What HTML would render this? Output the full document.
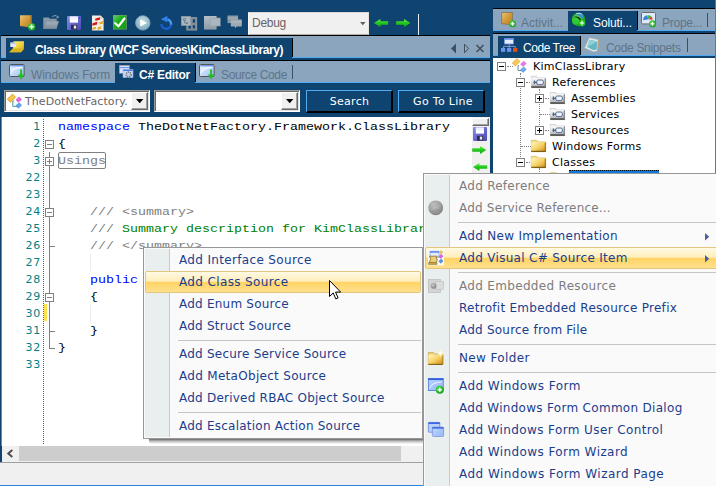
<!DOCTYPE html>
<html lang="en">
<head>
<meta charset="utf-8">
<title>Class Library - C# Editor</title>
<style>
*{box-sizing:border-box;margin:0;padding:0}
html,body{width:716px;height:486px;overflow:hidden}
body{position:relative;background:#0f4370;font-family:"Liberation Sans",sans-serif;font-size:13px;color:#000}
.a{position:absolute}
.t{position:absolute;white-space:nowrap;line-height:1}
svg{position:absolute;overflow:visible}
.strip{position:absolute;background:#8aa5bd}
.dk{position:absolute;background:#0f4370}
.bk{position:absolute;background:#000}
.bl{position:absolute;background:#52aaf0}
.tab{position:absolute;white-space:nowrap;font-size:12px;line-height:16px;color:#5f748a}
.tab.sel{color:#fff;font-weight:bold}
.code{position:absolute;white-space:pre;font-family:"Liberation Mono",monospace;font-size:13.33px;line-height:17px;height:17px;color:#000;transform:scaleY(.86);transform-origin:0 12px}
.kw{color:#0000ff}.cm{color:#008000}.gr{color:#808080}
.ln{position:absolute;left:0;width:41.100px;text-align:right;font-family:"DejaVu Sans","Liberation Sans",sans-serif;font-size:11px;line-height:17px;height:17px;color:#008284;letter-spacing:.85px;white-space:nowrap}
.tr{position:absolute;white-space:nowrap;font-family:"DejaVu Sans","Liberation Sans",sans-serif;font-size:11px;line-height:16px;height:16px;color:#000;letter-spacing:.27px}
.menu{position:absolute;background:#fafafa;border:1px solid #979797}
.gut{position:absolute;left:1px;top:1px;bottom:1px;width:25px;background:#e9eeee;border-right:1px solid #c8cbcb}
.mi{position:absolute;white-space:nowrap;font-family:"DejaVu Sans","Liberation Sans",sans-serif;font-size:12px;line-height:22px;height:22px;color:#1a3d8c;letter-spacing:.27px}
.mi.dis{color:#7d7d7d}
.sep{position:absolute;height:1px;background:#c5c5c5}
.hl{position:absolute;border:1px solid #e2c67e;border-radius:2px;background:linear-gradient(#fffae4 0%,#ffeebc 46%,#ffd464 52%,#ffe08e 100%)}
.combo{position:absolute;background:#fff;border:1px solid;border-color:#9a9a9a #fff #fff #9a9a9a;box-shadow:inset 1px 1px 0 #6a6a6a,inset -1px -1px 0 #e3e3e3}
.cbtn{position:absolute;background:#f0f0f0;border:1px solid;border-color:#fff #696969 #696969 #fff;box-shadow:inset -1px -1px 0 #a0a0a0}
.btn{position:absolute;background:#0f4370;border:1px solid #52aaf0;border-right:2px solid #000;border-bottom:2px solid #000;color:#fff;text-align:center;font-family:"DejaVu Sans","Liberation Sans",sans-serif;font-size:11px;letter-spacing:.3px;line-height:22px;white-space:nowrap;padding-left:4px}
.fold{position:absolute;width:9px;height:9px;border:1px solid #808080;background:#fff}
.fold i{position:absolute;left:1px;top:3px;width:5px;height:1px;background:#808080}
.fold b{position:absolute;left:3px;top:1px;width:1px;height:5px;background:#808080}
.tx{position:absolute;width:9px;height:9px;border:1px solid #808080;background:#fff}
.tx i{position:absolute;left:1px;top:3px;width:5px;height:1px;background:#000}
.tx b{position:absolute;left:3px;top:1px;width:1px;height:5px;background:#000}
.dv{position:absolute;width:0;border-left:1px dotted #808080}
.dh{position:absolute;height:0;border-top:1px dotted #808080}
</style>
</head>
<body>
<!-- ===== top toolbar ===== -->
<div class="a" id="toolbar" style="left:0;top:0;width:493px;height:35px">
  <div class="a" style="left:248px;top:12px;width:121px;height:23px;background:#f0f0f0;border:1px solid #f8f8f8;border-top-color:#d8d8d8;border-right-color:#e6e2de;border-bottom-color:#b4aca6"></div>
  <div class="tab" style="left:252px;top:15px;letter-spacing:-.28px;color:#6b6464">Debug</div>
  <svg style="left:360px;top:22px" width="6" height="4" viewBox="0 0 6 4"><path d="M0 0h5.600L2.800 3.200z" fill="#606060"/></svg>
  <div class="a" style="left:418px;top:14px;width:1px;height:21px;background:#e8eef4"></div>
</div>

<!-- ===== document title strip ===== -->
<div class="bk" style="left:1px;top:35px;width:489px;height:1px"></div>
<div class="strip" style="left:1px;top:36px;width:489px;height:21px"></div>
<div class="bl" style="left:1px;top:57px;width:489px;height:1px"></div>
<div class="dk" style="left:6px;top:38px;width:286px;height:20px"></div>
<div class="bk" style="left:292px;top:38px;width:1px;height:19px"></div>
<div class="tab sel" style="left:35px;top:42px;letter-spacing:-.41px">Class Library (WCF Services\KimClassLibrary)</div>
<svg style="left:450px;top:43px" width="36" height="11" viewBox="0 0 36 11">
  <path d="M6 0.500v10L1 5.500z" fill="#3f4f5f"/>
  <path d="M14.500 1.200v8.600L18.600 5.500z" fill="none" stroke="#3f4f5f" stroke-width="1"/>
  <path d="M26.500 2l7 7M33.500 2l-7 7" stroke="#3f4f5f" stroke-width="1.500" fill="none"/>
</svg>
<div class="bk" style="left:1px;top:60px;width:489px;height:1px"></div>

<!-- ===== editor sub tabs ===== -->
<div class="strip" style="left:1px;top:61px;width:489px;height:21px"></div>
<div class="bl" style="left:1px;top:82px;width:489px;height:1px"></div>
<div class="dk" style="left:115px;top:63px;width:80px;height:20px"></div>
<div class="bk" style="left:195px;top:63px;width:1px;height:19px"></div>
<div class="tab" style="left:31px;top:67px;letter-spacing:-.08px">Windows Form</div>
<div class="tab sel" style="left:139px;top:67px;letter-spacing:-.26px">C# Editor</div>
<div class="tab" style="left:221px;top:67px;letter-spacing:-.37px">Source Code</div>
<div class="a" style="left:292px;top:65px;width:1px;height:14px;background:#3f4f5f"></div>

<!-- ===== combo / button row ===== -->
<div class="combo" style="left:4px;top:90px;width:146px;height:22px"></div>
<div class="t" style="left:25px;top:96px;font-family:'DejaVu Sans','Liberation Sans',sans-serif;font-size:11px;color:#6b6464;letter-spacing:.09px">TheDotNetFactory.</div>
<div class="cbtn" style="left:131px;top:92px;width:17px;height:18px"></div>
<svg style="left:136px;top:99px" width="8" height="5" viewBox="0 0 8 5"><path d="M0 0h7.400L3.700 4.300z" fill="#000"/></svg>
<div class="combo" style="left:154px;top:90px;width:146px;height:22px"></div>
<div class="cbtn" style="left:281px;top:92px;width:17px;height:18px"></div>
<svg style="left:286px;top:99px" width="8" height="5" viewBox="0 0 8 5"><path d="M0 0h7.400L3.700 4.300z" fill="#000"/></svg>
<div class="btn" style="left:306px;top:90px;width:87px;height:23px;padding-left:1px">Search</div>
<div class="btn" style="left:398px;top:90px;width:87px;height:23px">Go To Line</div>

<!-- ===== right panel tabs ===== -->
<div class="bk" style="left:493px;top:8px;width:222px;height:1px"></div>
<div class="strip" style="left:493px;top:9px;width:223px;height:21px"></div>
<div class="bl" style="left:493px;top:30px;width:223px;height:1px"></div>
<div class="dk" style="left:568px;top:11px;width:69px;height:20px"></div>
<div class="bk" style="left:637px;top:11px;width:1px;height:19px"></div>
<div class="tab" style="left:521px;top:15px">Activit...</div>
<div class="tab sel" style="left:593px;top:15px;font-weight:normal;letter-spacing:-.11px">Soluti...</div>
<div class="tab" style="left:662px;top:15px;letter-spacing:-.25px">Prope...</div>
<div class="a" style="left:707px;top:13px;width:1px;height:14px;background:#3f4f5f"></div>
<div class="bk" style="left:493px;top:33px;width:222px;height:1px"></div>
<div class="strip" style="left:493px;top:34px;width:223px;height:21px"></div>
<div class="bl" style="left:493px;top:55px;width:223px;height:1px"></div>
<div class="dk" style="left:498px;top:36px;width:82px;height:20px"></div>
<div class="bk" style="left:580px;top:36px;width:1px;height:19px"></div>
<div class="tab sel" style="left:523px;top:40px;font-weight:normal;letter-spacing:-.45px">Code Tree</div>
<div class="tab" style="left:606px;top:40px;letter-spacing:-.32px">Code Snippets</div>
<div class="a" style="left:687px;top:38px;width:1px;height:14px;background:#3f4f5f"></div>
<div class="a" style="left:715px;top:0;width:1px;height:486px;background:#2a86dc"></div>
<!-- ===== shared gradients ===== -->
<svg width="0" height="0" style="left:0;top:0">
  <defs>
    <linearGradient id="gGold" x1="0" y1="0" x2="1" y2="1"><stop offset="0" stop-color="#e9c47a"/><stop offset=".5" stop-color="#d39a3a"/><stop offset="1" stop-color="#b57a1c"/></linearGradient>
    <radialGradient id="gPlus" cx=".4" cy=".35" r=".7"><stop offset="0" stop-color="#5fe05f"/><stop offset="1" stop-color="#0f9a1a"/></radialGradient>
    <linearGradient id="gFolderG" x1="0" y1="0" x2="0" y2="1"><stop offset="0" stop-color="#a3b1bb"/><stop offset="1" stop-color="#7c8d99"/></linearGradient>
    <linearGradient id="gFloppy" x1="0" y1="0" x2="1" y2="1"><stop offset="0" stop-color="#8a8ae6"/><stop offset="1" stop-color="#4a49b4"/></linearGradient>
    <linearGradient id="gCheck" x1="0" y1="0" x2="1" y2="1"><stop offset="0" stop-color="#6fd06f"/><stop offset=".4" stop-color="#1fb01f"/><stop offset="1" stop-color="#0f9a10"/></linearGradient>
    <radialGradient id="gPlay" cx=".5" cy=".35" r=".75"><stop offset="0" stop-color="#c4dde6"/><stop offset="1" stop-color="#6fa3b8"/></radialGradient>
    <linearGradient id="gWin" x1="0" y1="0" x2="1" y2="1"><stop offset="0" stop-color="#f4f8ff"/><stop offset=".5" stop-color="#c3d9fb"/><stop offset="1" stop-color="#9fc2f6"/></linearGradient>
    <linearGradient id="gGrn" x1="0" y1="0" x2="0" y2="1"><stop offset="0" stop-color="#6cf04c"/><stop offset=".5" stop-color="#22c81e"/><stop offset="1" stop-color="#17a514"/></linearGradient>
    <linearGradient id="gGray" x1="0" y1="0" x2="0" y2="1"><stop offset="0" stop-color="#b4c0c8"/><stop offset="1" stop-color="#8d9ba5"/></linearGradient>
    <linearGradient id="gYel" x1="0" y1="0" x2="1" y2="1"><stop offset="0" stop-color="#fff3a6"/><stop offset=".5" stop-color="#f2d63c"/><stop offset="1" stop-color="#c9a516"/></linearGradient>
    <linearGradient id="gFold" x1="0" y1="0" x2="1" y2="1"><stop offset="0" stop-color="#fff6c4"/><stop offset=".5" stop-color="#f6d264"/><stop offset="1" stop-color="#c98a12"/></linearGradient>
    <linearGradient id="gRef" x1="0" y1="0" x2="0" y2="1"><stop offset="0" stop-color="#fbfbfb"/><stop offset=".55" stop-color="#d8d8d8"/><stop offset="1" stop-color="#9a9a9a"/></linearGradient>
    <radialGradient id="gBall" cx=".4" cy=".35" r=".7"><stop offset="0" stop-color="#c9c9c9"/><stop offset="1" stop-color="#7e7e7e"/></radialGradient>
    <radialGradient id="gGlobe" cx=".4" cy=".4" r=".7"><stop offset="0" stop-color="#58e058"/><stop offset="1" stop-color="#0c8c14"/></radialGradient>
  </defs>
</svg>

<!-- ===== toolbar icons ===== -->
<!-- new item -->
<svg style="left:19px;top:14px" width="18" height="18" viewBox="0 0 18 18">
  <path d="M1 1.200h11.600v12.600l-5-.9L1 12z" fill="url(#gGold)"/>
  <path d="M11.400 1.200h1.200v12.600l-1.200-.3z" fill="#a8701a"/>
  <circle cx="12.700" cy="12.900" r="3.700" fill="url(#gPlus)"/>
  <path d="M10.400 12.900h4.600M12.700 10.600v4.600" stroke="#fff" stroke-width="1.200"/>
</svg>
<!-- open folder (grey) -->
<svg style="left:43px;top:14px" width="17" height="16" viewBox="0 0 17 16">
  <path d="M0.300 3.500h5.400l1.200 1.300h6.800v9.900H0.300z" fill="#8a9aa6"/>
  <path d="M3.300 7.200h12.500L13.400 14.700H0.300z" fill="url(#gFolderG)" stroke="#74858f" stroke-width=".5"/>
  <path d="M9.200 3.200c1.200-2 3.800-2.200 5.200-.4" fill="none" stroke="#95a5b0" stroke-width="1"/>
  <path d="M13.200 4.200l2.600-.2-.6-2.500z" fill="#95a5b0"/>
</svg>
<!-- save -->
<svg style="left:67px;top:16px" width="14" height="14" viewBox="0 0 14 14">
  <rect x="0" y="0" width="14" height="14" rx="1" fill="url(#gFloppy)"/>
  <rect x="2.800" y="0.600" width="8.200" height="6" fill="#fff"/>
  <rect x="2.800" y="0.600" width="8.200" height="3" fill="#eef0fb"/>
  <rect x="4" y="8.800" width="6.200" height="4.800" fill="#2b2b50"/>
  <rect x="6.800" y="9.600" width="2.400" height="3" fill="#e8e8f4"/>
  <rect x="12" y="1.200" width="1" height="1.200" fill="#35358f"/>
</svg>
<!-- script page -->
<svg style="left:92px;top:15px" width="13" height="16" viewBox="0 0 13 16">
  <path d="M0 0.500h8.600l3 3V15.500H0z" fill="#f4efe6"/>
  <path d="M8.600 0.500v3h3z" fill="#c9c1b2"/>
  <path d="M3.300 3.600l4.700-1.400v2.500L3.300 5.800z" fill="#d81a1a"/>
  <path d="M0.400 8.200l4.800-1.500v2.700L0.400 10.700z" fill="#d81a1a"/>
  <path d="M7.200 7.400l4.200-1.600-.8 1.800 1.900.4-4.600 1.600z" fill="#e7a81a"/>
  <path d="M0.400 12.800l3.600-1v2l-3.600 1z" fill="#e7a81a"/>
  <path d="M5.600 12.600l4-1.600-1 1.900 1.500.4-4.200 1.800z" fill="#e7a81a"/>
</svg>
<!-- check -->
<svg style="left:113px;top:15px" width="14" height="15" viewBox="0 0 14 15">
  <rect x="0" y="0" width="13.600" height="14.400" fill="url(#gCheck)"/>
  <rect x="0.300" y="0.300" width="13" height="13.800" fill="none" stroke="#7a9a7c" stroke-width=".6"/>
  <path d="M2.200 8.200l3.200 3.100 6-7.800" fill="none" stroke="#fff" stroke-width="2.200" stroke-linecap="round" stroke-linejoin="round"/>
</svg>
<!-- play -->
<svg style="left:135px;top:15px" width="16" height="16" viewBox="0 0 16 16">
  <circle cx="7.800" cy="7.900" r="7.200" fill="url(#gPlay)" stroke="#8fa9b6" stroke-width=".8"/>
  <path d="M5.200 4.200v7.400L12 7.900z" fill="#fff"/>
</svg>
<!-- refresh -->
<svg style="left:159px;top:15px" width="15" height="16" viewBox="0 0 15 16">
  <path d="M8.400 4.300A4.800 4.800 0 1 1 2.400 9" fill="none" stroke="#1a5fd0" stroke-width="2.400"/>
  <path d="M8.400 4.300A4.800 4.800 0 0 1 12 9.600" fill="none" stroke="#4a98f6" stroke-width="2.400"/>
  <path d="M1.800 4.200L8.400 0.800v6.400z" fill="#2f80ee"/>
</svg>
<!-- designer (grey) -->
<svg style="left:181px;top:16px" width="17" height="15" viewBox="0 0 17 15">
  <rect x="5.200" y="1" width="11" height="13.600" fill="#7f8e99"/>
  <rect x="11.800" y="3.400" width="2.200" height="3.200" fill="#0f4370"/>
  <rect x="11.800" y="9.200" width="2.200" height="3.200" fill="#0f4370"/>
  <rect x="7.600" y="9.600" width="2.200" height="3" fill="#0f4370"/>
  <rect x="0.300" y="0.300" width="9.400" height="9.200" fill="#aab6bf" stroke="#8b99a3" stroke-width=".6"/>
  <path d="M2.500 2.500h2v2h-2zM3.500 4.500v2.500h2.500M6 6l1 1-1 1-1-1z" fill="none" stroke="#6c7b86" stroke-width=".8"/>
</svg>
<!-- windows (grey) -->
<svg style="left:204px;top:16px" width="17" height="14" viewBox="0 0 17 14">
  <rect x="0" y="0" width="12.600" height="13.600" fill="url(#gGray)"/>
  <rect x="6.200" y="2" width="10" height="8" fill="#a9b6bf" stroke="#94a2ac" stroke-width=".6"/>
</svg>
<!-- comments (grey) -->
<svg style="left:227px;top:15px" width="16" height="15" viewBox="0 0 16 15">
  <rect x="0.500" y="0.500" width="10.600" height="7.600" fill="#8b99a4"/>
  <rect x="0.500" y="2.600" width="10.600" height="1" fill="#a7b3bc"/>
  <path d="M3.800 4.400h11v7.200H9.600L8 13.600V11.600H3.800z" fill="#9eabb5"/>
  <path d="M3.800 6.400h11v1h-11z" fill="#b4bfc7"/>
</svg>
<!-- nav arrows -->
<svg style="left:374px;top:19px" width="15" height="8" viewBox="0 0 15 8">
  <path d="M0 4L6.400 0v2.200H14.200v3.600H6.400V8z" fill="url(#gGrn)"/>
</svg>
<svg style="left:396px;top:19px" width="15" height="8" viewBox="0 0 15 8">
  <path d="M14.400 4L8 0v2.200H0.200v3.600H8V8z" fill="url(#gGrn)"/>
</svg>

<!-- ===== title icon ===== -->
<svg style="left:9px;top:41px" width="16" height="12" viewBox="0 0 16 12">
  <path d="M4.600 0.300H15l-.2 7.700L12 11.300H0.300L4 7.600z" fill="url(#gYel)"/>
  <path d="M0.300 11.300L4 7.600h8l2.800.4L12 11.300z" fill="#d7b421"/>
  <rect x="1.300" y="1.600" width="5.800" height="4.400" fill="#e4e8f6"/>
  <rect x="1.300" y="1.600" width="5.800" height="1.200" fill="#b8c2e4"/>
</svg>

<!-- ===== sub-tab icons ===== -->
<svg style="left:9px;top:64px" width="16" height="16" viewBox="0 0 16 16">
  <rect x="0.500" y="0.500" width="14.600" height="12" rx="1" fill="url(#gWin)" stroke="#555" stroke-width="1"/>
  <rect x="1.200" y="1.200" width="13.200" height="1.100" fill="#4d86ee"/>
  <path d="M1.500 9.500C3 5 7 3.500 13 3.400" fill="none" stroke="#f6faff" stroke-width="1.100"/>
  <path d="M11.100 5.400h2v5h2.200l-3.200 5-3.200-5h2.200z" fill="#1fc01f"/>
</svg>
<svg style="left:199px;top:64px" width="16" height="16" viewBox="0 0 16 16">
  <rect x="0.500" y="0.500" width="14.600" height="12" rx="1" fill="url(#gWin)" stroke="#555" stroke-width="1"/>
  <rect x="1.200" y="1.200" width="13.200" height="1.100" fill="#4d86ee"/>
  <path d="M1.500 9.500C3 5 7 3.500 13 3.400" fill="none" stroke="#f6faff" stroke-width="1.100"/>
  <path d="M11.100 5.400h2v5h2.200l-3.200 5-3.200-5h2.200z" fill="#1fc01f"/>
</svg>
<svg style="left:119px;top:65px" width="15" height="14" viewBox="0 0 15 14">
  <rect x="0.300" y="0.300" width="10" height="8" fill="#dbe6fb" stroke="#8f8fa8" stroke-width=".6"/>
  <rect x="1" y="2" width="9" height="1.200" fill="#6f97ee"/>
  <rect x="4" y="4.400" width="10" height="8.200" fill="#c7dafa" stroke="#8ea9dd" stroke-width=".6"/>
  <rect x="4.300" y="4.700" width="9.400" height="1.300" fill="#3f7be6"/>
  <circle cx="9.600" cy="9.600" r="2.600" fill="#b9c6d6" stroke="#6d6d6d" stroke-width="1.300" stroke-dasharray="1.300 .9"/>
  <circle cx="9.600" cy="9.600" r="1.100" fill="#bcd2f6"/>
</svg>

<!-- ===== combo icon ===== -->
<svg style="left:7px;top:93px" width="16" height="17" viewBox="0 0 16 17">
  <path d="M7 8h-1.200v5.400H10" fill="none" stroke="#4f9a9a" stroke-width="1"/>
  <path d="M0.300 6L5.600 1l3 3.200L3.300 9.400z" fill="#f9c74a" stroke="#c58d12" stroke-width=".6"/>
  <path d="M9 6.700l3.200-2.800 2.300 2.500-3.200 2.900z" fill="#e668e6" stroke="#b03db0" stroke-width=".5"/>
  <path d="M9 12.600l3.200-2.800 2.300 2.500-3.200 2.900z" fill="#5aa7f2" stroke="#2a63c4" stroke-width=".5"/>
</svg>

<!-- ===== right panel tab icons ===== -->
<svg style="left:501px;top:12px" width="16" height="16" viewBox="0 0 16 16">
  <path d="M0.600 0.500h10.800v12.400l-4.800-.5L0.600 11.600z" fill="url(#gGold)" stroke="#7d6a4a" stroke-width=".7"/>
  <circle cx="11.600" cy="11.800" r="3.500" fill="url(#gPlus)"/>
  <path d="M9.700 11.800h3.800M11.600 9.900v3.800" stroke="#fff" stroke-width="1.200"/>
</svg>
<svg style="left:571px;top:12px" width="16" height="15" viewBox="0 0 16 15">
  <circle cx="7.600" cy="7.500" r="6.700" fill="url(#gGlobe)"/>
  <path d="M4.400 2.200C7.400 .6 11.400 1.600 12.600 5.200l-2 1.600C9.600 4 7.200 2.600 4.400 2.200z" fill="#3f8be8"/>
  <path d="M5.200 1.700C7.800 .8 10 1.200 11.400 2.600" fill="none" stroke="#c8e6f8" stroke-width=".9"/>
  <path d="M2.600 5.200c2.800-1.400 6-.2 7.400 2.600l-1.200 1C7.800 6.400 5.600 5.200 2.600 5.200z" fill="#0c2c18"/>
  <circle cx="4.600" cy="9" r="3.600" fill="#2fd02f" opacity=".75"/>
  <circle cx="11" cy="11" r="3.400" fill="#20c020"/>
  <path d="M8.800 11h4.400M11 8.800v4.400" stroke="#fff" stroke-width="1.100"/>
</svg>
<svg style="left:641px;top:12px" width="17" height="16" viewBox="0 0 17 16">
  <rect x="0.500" y="0.500" width="14" height="11.400" rx="1" fill="#dfe9fb" stroke="#6b6b6b" stroke-width="1"/>
  <path d="M2.300 8.200A3.800 3.800 0 0 1 6 3.500l1.500 3.700z" fill="#3c7de0"/>
  <path d="M6 3.500a4 4 0 0 1 4.200.7L7.500 7.200z" fill="#38c038"/>
  <path d="M10.200 4.200a4 4 0 0 1 1.200 3.600L7.500 7.200z" fill="#e03a2c"/>
  <circle cx="11.500" cy="11.800" r="3.500" fill="url(#gPlus)"/>
  <path d="M9.600 11.800h3.800M11.500 9.900v3.800" stroke="#fff" stroke-width="1.200"/>
</svg>
<svg style="left:501px;top:38px" width="17" height="14" viewBox="0 0 17 14">
  <path d="M8.200 6v2.400M2.400 10V8.400h11.800V10M8.200 8.400V10" fill="none" stroke="#7f9ad8" stroke-width="1"/>
  <rect x="3.400" y="0.400" width="9" height="5.600" fill="#e6ecfb" stroke="#6f8fe0" stroke-width=".8"/>
  <rect x="3.400" y="0.400" width="9" height="1.300" fill="#5a83e6"/>
  <rect x="0" y="10" width="4.200" height="3.800" fill="#6f96ee"/>
  <rect x="6" y="10" width="4.200" height="3.800" fill="#6f96ee"/>
  <rect x="12" y="10" width="4.400" height="3.800" fill="#e84a1e"/>
</svg>
<svg style="left:584px;top:37px" width="16" height="16" viewBox="0 0 16 16">
  <path d="M5.200 0.600l9.200 2-0.800 11.400-4 1L0.400 11z" fill="#dfe9ea" stroke="#9aa7ab" stroke-width=".6"/>
  <path d="M5.600 2.800l7.600 1.800-.6 7.800-3 .8-6.400-3.200z" fill="#66b6c4"/>
  <path d="M5.600 2.800l7.600 1.800L3.200 10z" fill="#8fd0d8"/>
  <path d="M14.400 2.600l-.8 11.400" stroke="#c6a06a" stroke-width=".9"/>
</svg>
<!-- ===== code editor ===== -->
<div class="a" id="editor" style="left:1px;top:117px;width:489px;height:329px;background:#fff;border-left:1px solid #6f8ba6"></div>
<div class="a" style="left:472px;top:117px;width:18px;height:327px;background:#f0f0f0"></div>
<div class="a" style="left:472px;top:118px;width:17px;height:8px;background:#f0f0f0;border:1px solid;border-color:#fff #696969 #696969 #fff;box-shadow:inset -1px -1px 0 #a0a0a0"></div>
<svg style="left:473px;top:127px" width="14" height="14" viewBox="0 0 14 14">
  <rect x="0" y="0" width="14" height="14" rx="1" fill="url(#gFloppy)"/>
  <rect x="2.800" y="0.600" width="8.200" height="6" fill="#fff"/>
  <rect x="2.800" y="0.600" width="8.200" height="3" fill="#eef0fb"/>
  <rect x="4" y="8.800" width="6.200" height="4.800" fill="#2b2b50"/>
  <rect x="6.800" y="9.600" width="2.400" height="3" fill="#e8e8f4"/>
</svg>
<svg style="left:472px;top:146px" width="15" height="8" viewBox="0 0 15 8">
  <path d="M14.400 4L8 0v2.200H0.200v3.600H8V8z" fill="url(#gGrn)"/>
</svg>
<svg style="left:473px;top:163px" width="15" height="8" viewBox="0 0 15 8">
  <path d="M0 4L6.400 0v2.200H14.200v3.600H6.400V8z" fill="url(#gGrn)"/>
</svg>
<div class="a" style="left:43px;top:119px;width:0;height:325px;border-left:1px dotted #008284"></div>
<div class="a" style="left:49px;top:152px;width:1px;height:196px;background:#808080"></div>
<div class="a" style="left:44px;top:304px;width:3px;height:17px;background:#ffe14d"></div>
<!-- ===== code lines ===== -->
<div class="ln" style="top:118px">1</div>
<div class="code" style="left:58px;top:118px"><span class="kw">namespace</span> TheDotNetFactory.Framework.ClassLibrary</div>
<div class="ln" style="top:135px">2</div>
<div class="code" style="left:58px;top:135px">{</div>
<div class="ln" style="top:152px">3</div>
<div class="code" style="left:58px;top:152px"><span class="gr">Usings</span></div>
<div class="ln" style="top:169px">22</div>
<div class="ln" style="top:186px">23</div>
<div class="ln" style="top:203px">24</div>
<div class="code" style="left:58px;top:203px">    <span class="gr">/// &lt;summary&gt;</span></div>
<div class="ln" style="top:220px">25</div>
<div class="code" style="left:58px;top:220px">    <span class="gr">///</span><span class="cm"> Summary description for KimClassLibrary</span></div>
<div class="ln" style="top:237px">26</div>
<div class="code" style="left:58px;top:237px">    <span class="gr">/// &lt;/summary&gt;</span></div>
<div class="ln" style="top:254px">27</div>
<div class="ln" style="top:271px">28</div>
<div class="code" style="left:58px;top:271px">    <span class="kw">public class</span> KimClassLibrary</div>
<div class="ln" style="top:288px">29</div>
<div class="code" style="left:58px;top:288px">    {</div>
<div class="ln" style="top:305px">30</div>
<div class="ln" style="top:322px">31</div>
<div class="code" style="left:58px;top:322px">    }</div>
<div class="ln" style="top:339px">32</div>
<div class="code" style="left:58px;top:339px">}</div>
<div class="ln" style="top:356px">33</div>
<div class="a" style="left:49px;top:152px;width:1px;height:197px;background:#808080"></div>
<div class="fold" style="left:45px;top:140px"><i></i></div>
<div class="fold" style="left:45px;top:157px"><i></i><b></b></div>
<div class="fold" style="left:45px;top:208px"><i></i></div>
<div class="fold" style="left:45px;top:293px"><i></i></div>
<div class="a" style="left:49px;top:246px;width:6px;height:1px;background:#808080"></div>
<div class="a" style="left:49px;top:331px;width:6px;height:1px;background:#808080"></div>
<div class="a" style="left:49px;top:348px;width:6px;height:1px;background:#808080"></div>
<div class="a" style="left:58px;top:152px;width:48px;height:17px;border:1px solid #808080;border-radius:2px"></div>
<div class="a" style="left:90px;top:254px;width:1px;height:17px;background:#ececec"></div>
<div class="a" style="left:90px;top:305px;width:1px;height:17px;background:#ececec"></div>
<!-- ===== tree ===== -->
<div class="a" id="tree" style="left:493px;top:58px;width:222px;height:428px;background:#fff"></div>
<div class="dh" style="left:507px;top:66px;width:6px"></div>
<div class="dv" style="left:520px;top:73px;height:86px"></div>
<div class="dh" style="left:526px;top:82px;width:6px"></div>
<div class="dv" style="left:539px;top:89px;height:38px"></div>
<div class="dh" style="left:545px;top:98px;width:6px"></div>
<div class="dh" style="left:540px;top:114px;width:10px"></div>
<div class="dh" style="left:545px;top:130px;width:6px"></div>
<div class="dh" style="left:521px;top:146px;width:10px"></div>
<div class="dh" style="left:526px;top:162px;width:6px"></div>
<div class="dv" style="left:539px;top:168px;height:6px"></div>
<div class="tx" style="left:497px;top:62px"><i></i></div>
<div class="tx" style="left:516px;top:78px"><i></i></div>
<div class="tx" style="left:535px;top:94px"><i></i><b></b></div>
<div class="tx" style="left:535px;top:126px"><i></i><b></b></div>
<div class="tx" style="left:516px;top:158px"><i></i></div>
<svg style="left:512px;top:58px" width="16" height="16" viewBox="0 0 16 16">
  <path d="M7 7.500h-1v5H10" fill="none" stroke="#6c8fb0" stroke-width="1"/>
  <path d="M0.300 5L5 0.500l3 3L3.300 8z" fill="#f8c95a" stroke="#cf9a22" stroke-width=".6"/>
  <path d="M8.600 6l3.200-2.800 2.400 2.400L11 8.600z" fill="#e878e8" stroke="#c050c0" stroke-width=".5"/>
  <path d="M8.600 11.800l3.200-2.800 2.400 2.400L11 14.400z" fill="#6aaef4" stroke="#3a74d0" stroke-width=".5"/>
</svg>
<svg style="left:531px;top:76px" width="15" height="12" viewBox="0 0 15 12">
  <path d="M0.300 0.300h5.200l1.200 1.600h8v9.800H0.300z" fill="#ededed" stroke="#c2c2c2" stroke-width=".6"/>
  <rect x="0.300" y="2.200" width="14.400" height="9.500" fill="url(#gRef)"/>
  <rect x="0.300" y="10.300" width="14.400" height="1.500" fill="#4a4a4a"/>
  <rect x="13.700" y="2.400" width="1" height="9.400" fill="#6a6a6a"/>
  <rect x="5.800" y="4" width="6.600" height="4.600" rx="1.600" fill="#eef3fb" stroke="#54688e" stroke-width="1"/>
  <path d="M2.600 6.300h3.200" stroke="#54688e" stroke-width="1.600"/>
  <path d="M3.400 4.600v3.400" stroke="#54688e" stroke-width="1.200"/>
</svg>
<svg style="left:550px;top:92px" width="15" height="12" viewBox="0 0 15 12">
  <path d="M0.300 0.300h5.200l1.200 1.600h8v9.800H0.300z" fill="#ededed" stroke="#c2c2c2" stroke-width=".6"/>
  <rect x="0.300" y="2.200" width="14.400" height="9.500" fill="url(#gRef)"/>
  <rect x="0.300" y="10.300" width="14.400" height="1.500" fill="#4a4a4a"/>
  <rect x="13.700" y="2.400" width="1" height="9.400" fill="#6a6a6a"/>
  <rect x="5.800" y="4" width="6.600" height="4.600" rx="1.600" fill="#eef3fb" stroke="#54688e" stroke-width="1"/>
  <path d="M2.600 6.300h3.200" stroke="#54688e" stroke-width="1.600"/>
  <path d="M3.400 4.600v3.400" stroke="#54688e" stroke-width="1.200"/>
</svg>
<svg style="left:550px;top:108px" width="15" height="12" viewBox="0 0 15 12">
  <path d="M0.300 0.300h5.200l1.200 1.600h8v9.800H0.300z" fill="#ededed" stroke="#c2c2c2" stroke-width=".6"/>
  <rect x="0.300" y="2.200" width="14.400" height="9.500" fill="url(#gRef)"/>
  <rect x="0.300" y="10.300" width="14.400" height="1.500" fill="#4a4a4a"/>
  <rect x="13.700" y="2.400" width="1" height="9.400" fill="#6a6a6a"/>
  <rect x="5.800" y="4" width="6.600" height="4.600" rx="1.600" fill="#eef3fb" stroke="#54688e" stroke-width="1"/>
  <path d="M2.600 6.300h3.200" stroke="#54688e" stroke-width="1.600"/>
  <path d="M3.400 4.600v3.400" stroke="#54688e" stroke-width="1.200"/>
</svg>
<svg style="left:550px;top:124px" width="15" height="12" viewBox="0 0 15 12">
  <path d="M0.300 0.300h5.200l1.200 1.600h8v9.800H0.300z" fill="#ededed" stroke="#c2c2c2" stroke-width=".6"/>
  <rect x="0.300" y="2.200" width="14.400" height="9.500" fill="url(#gRef)"/>
  <rect x="0.300" y="10.300" width="14.400" height="1.500" fill="#4a4a4a"/>
  <rect x="13.700" y="2.400" width="1" height="9.400" fill="#6a6a6a"/>
  <rect x="5.800" y="4" width="6.600" height="4.600" rx="1.600" fill="#eef3fb" stroke="#54688e" stroke-width="1"/>
  <path d="M2.600 6.300h3.200" stroke="#54688e" stroke-width="1.600"/>
  <path d="M3.400 4.600v3.400" stroke="#54688e" stroke-width="1.200"/>
</svg>
<svg style="left:531px;top:140px" width="15" height="12" viewBox="0 0 15 12">
  <path d="M0.300 0.300h5.200l1.200 1.600h8v9.800H0.300z" fill="#f7e08e" stroke="#cfa63e" stroke-width=".6"/>
  <rect x="0.300" y="2.400" width="14.400" height="9.400" fill="url(#gFold)"/>
  <rect x="0.300" y="10.800" width="14.400" height="1" fill="#6a4a0c"/>
  <rect x="13.800" y="2.600" width=".9" height="9.200" fill="#8f6414"/>
</svg>
<svg style="left:531px;top:156px" width="15" height="12" viewBox="0 0 15 12">
  <path d="M0.300 0.300h5.200l1.200 1.600h8v9.800H0.300z" fill="#f7e08e" stroke="#cfa63e" stroke-width=".6"/>
  <rect x="0.300" y="2.400" width="14.400" height="9.400" fill="url(#gFold)"/>
  <rect x="0.300" y="10.800" width="14.400" height="1" fill="#6a4a0c"/>
  <rect x="13.800" y="2.600" width=".9" height="9.200" fill="#8f6414"/>
</svg>
<div class="tr" style="left:533px;top:59px">KimClassLibrary</div>
<div class="tr" style="left:552px;top:75px">References</div>
<div class="tr" style="left:571px;top:91px">Assemblies</div>
<div class="tr" style="left:571px;top:107px">Services</div>
<div class="tr" style="left:571px;top:123px">Resources</div>
<div class="tr" style="left:552px;top:139px">Windows Forms</div>
<div class="tr" style="left:552px;top:155px">Classes</div>
<div class="a" style="left:550px;top:172px;width:7px;height:2px;background:#e8d9a0"></div>
<div class="a" style="left:569px;top:170px;width:90px;height:4px;background:#0f7ae0;border-top:1px dotted #000"></div>
<!-- ===== scrollbar / status ===== -->
<div class="a" style="left:2px;top:446px;width:488px;height:16px;background:#f0f0f0"></div>
<div class="a" style="left:19px;top:446px;width:382px;height:15px;background:#cdcdcd"></div>
<svg style="left:6px;top:449px" width="8" height="9" viewBox="0 0 8 9"><path d="M6.300 1L2.300 4.500l4 3.500" fill="none" stroke="#4d4d4d" stroke-width="2"/></svg>
<div class="a" style="left:0;top:462px;width:424px;height:1px;background:#a0a0a0"></div>
<div class="a" style="left:0;top:463px;width:424px;height:23px;background:#f0f0f0"></div>
<div class="a" style="left:0;top:485px;width:424px;height:1px;background:#2a86dc"></div>
<!-- ===== context menu ===== -->
<div class="menu" id="ctx" style="left:423px;top:173px;width:300px;height:330px">
  <div class="gut"></div>
</div>
<div class="hl" style="left:425px;top:247px;width:295px;height:22px"></div>
<div class="mi dis" style="left:459px;top:175px;letter-spacing:0.27px">Add Reference</div>
<div class="mi dis" style="left:459px;top:197px;letter-spacing:0.20px">Add Service Reference...</div>
<div class="sep" style="left:458px;top:222px;width:258px"></div>
<div class="mi" style="left:459px;top:225px;letter-spacing:0.30px">Add New Implementation</div>
<div class="mi" style="left:459px;top:247px;letter-spacing:0.30px">Add Visual C# Source Item</div>
<div class="sep" style="left:458px;top:272px;width:258px"></div>
<div class="mi dis" style="left:459px;top:275px;letter-spacing:0.32px">Add Embedded Resource</div>
<div class="mi" style="left:459px;top:297px;letter-spacing:0.28px">Retrofit Embedded Resource Prefix</div>
<div class="mi" style="left:459px;top:319px;letter-spacing:0.22px">Add Source from File</div>
<div class="sep" style="left:458px;top:344px;width:258px"></div>
<div class="mi" style="left:459px;top:347px;letter-spacing:0.38px">New Folder</div>
<div class="sep" style="left:458px;top:372px;width:258px"></div>
<div class="mi" style="left:459px;top:375px;letter-spacing:0.45px">Add Windows Form</div>
<div class="mi" style="left:459px;top:397px;letter-spacing:0.30px">Add Windows Form Common Dialog</div>
<div class="mi" style="left:459px;top:419px;letter-spacing:0.39px">Add Windows Form User Control</div>
<div class="mi" style="left:459px;top:441px;letter-spacing:0.42px">Add Windows Form Wizard</div>
<div class="mi" style="left:459px;top:463px;letter-spacing:0.46px">Add Windows Form Wizard Page</div>
<svg style="left:705px;top:233px" width="5" height="8" viewBox="0 0 5 8"><path d="M0 0l4.200 3.700L0 7.400z" fill="#4a5fa0"/></svg>
<svg style="left:705px;top:255px" width="5" height="8" viewBox="0 0 5 8"><path d="M0 0l4.200 3.700L0 7.400z" fill="#4a5fa0"/></svg>

<!-- ===== sub menu ===== -->
<div class="a" style="left:149px;top:439px;width:274px;height:5px;background:linear-gradient(rgba(0,0,0,.6),rgba(0,0,0,.25) 45%,rgba(0,0,0,0));border-radius:0 0 0 3px"></div>
<div class="menu" id="sub" style="left:143px;top:247px;width:280px;height:192px">
  <div class="gut"></div>
</div>
<div class="hl" style="left:145px;top:271px;width:276px;height:22px"></div>
<div class="mi" style="left:179px;top:249px;letter-spacing:0.34px">Add Interface Source</div>
<div class="mi" style="left:179px;top:271px;letter-spacing:0.36px">Add Class Source</div>
<div class="mi" style="left:179px;top:293px;letter-spacing:0.22px">Add Enum Source</div>
<div class="mi" style="left:179px;top:315px;letter-spacing:0.23px">Add Struct Source</div>
<div class="sep" style="left:178px;top:340px;width:243px"></div>
<div class="mi" style="left:179px;top:343px;letter-spacing:0.23px">Add Secure Service Source</div>
<div class="mi" style="left:179px;top:365px;letter-spacing:0.30px">Add MetaObject Source</div>
<div class="mi" style="left:179px;top:387px;letter-spacing:0.23px">Add Derived RBAC Object Source</div>
<div class="sep" style="left:178px;top:412px;width:243px"></div>
<div class="mi" style="left:179px;top:415px;letter-spacing:0.23px">Add Escalation Action Source</div>
<!-- cursor -->
<svg style="left:329px;top:280px" width="13" height="20" viewBox="0 0 13 20"><path d="M0.500 0.500v16l3.700-3.600 2.600 6 2.300-1-2.600-5.800h5.200z" fill="#fff" stroke="#000" stroke-width="1"/></svg>
<!-- ===== menu icons ===== -->
<svg style="left:428px;top:200px" width="16" height="16" viewBox="0 0 16 16">
  <circle cx="7.700" cy="7.800" r="7.400" fill="url(#gBall)"/>
  <path d="M1.500 9.500c3-4 7-5.500 11.500-4.500" fill="none" stroke="#a9a9a9" stroke-width="1.300" opacity=".7"/>
  <path d="M3 12.500c2.500-2 6-3 10.500-2" fill="none" stroke="#8b8b8b" stroke-width="1" opacity=".7"/>
</svg>
<svg style="left:428px;top:250px" width="16" height="16" viewBox="0 0 16 16">
  <rect x="0" y="0" width="16" height="15.400" fill="#fbfbf6"/>
  <rect x="2" y="1.200" width="9" height="6.400" fill="#e5ecfb" stroke="#7c9be6" stroke-width=".7"/>
  <rect x="2" y="1.200" width="9" height="1.500" fill="#5d86ea"/>
  <path d="M1.600 6.200h7.600l-1.200 2 1.400 1.200-1.200 3.200H1.200l1.400-3.400z" fill="#e9cf7a" stroke="#8a6a22" stroke-width=".8"/>
  <path d="M0.600 12.800h8.400v1.600H0.600z" fill="#d8b654" stroke="#8a6a22" stroke-width=".6"/>
  <path d="M11.400 2.200l1.800-1.600 1.700 1.700-1.800 1.700z" fill="#f5c64a" stroke="#c99322" stroke-width=".4"/>
  <path d="M10.800 6.400l2.400-2.200 1.900 2-2.400 2.300z" fill="#d866e0" stroke="#a53cb4" stroke-width=".4"/>
  <path d="M10.800 11.200l2.400-2.200 1.900 2-2.400 2.300z" fill="#4f97ee" stroke="#2a60c4" stroke-width=".4"/>
</svg>
<svg style="left:428px;top:279px" width="16" height="14" viewBox="0 0 16 14">
  <rect x="0.300" y="0.600" width="12" height="12.800" fill="#d4d4d4" stroke="#b3b3b3" stroke-width=".6"/>
  <rect x="7.400" y="2.400" width="8.200" height="7.800" fill="#dcdcdc" stroke="#bdbdbd" stroke-width=".6"/>
  <circle cx="5.600" cy="6.800" r="2.900" fill="url(#gBall)"/>
</svg>
<svg style="left:428px;top:350px" width="16" height="15" viewBox="0 0 16 15">
  <path d="M0.400 2.600h5l1.200 1.400h8.200v10.400H0.400z" fill="#f3d97c" stroke="#b98f2c" stroke-width=".6"/>
  <rect x="0.400" y="4.800" width="14.400" height="9.600" fill="url(#gFold)"/>
  <path d="M0.400 14.400h14.400" stroke="#6e4e10" stroke-width=".9"/>
  <path d="M14.800 5v9.400" stroke="#a5761a" stroke-width=".8"/>
  <path d="M12.400 0v6.400M9.200 3.200h6.400M10.200 1l4.400 4.400M14.600 1l-4.400 4.400" stroke="#fff8c8" stroke-width="1"/>
  <circle cx="12.400" cy="3.200" r="1.600" fill="#fffdf0"/>
</svg>
<svg style="left:428px;top:378px" width="17" height="17" viewBox="0 0 17 17">
  <rect x="0.400" y="0.400" width="14.800" height="12" fill="url(#gWin)" stroke="#3f6fd8" stroke-width=".8"/>
  <rect x="0.400" y="0.400" width="14.800" height="1.700" fill="#2f62de"/>
  <rect x="0.800" y="2.100" width="14" height="10" fill="#8fb5f6" opacity=".55"/>
  <path d="M1.500 10.500C3 6 7 4.200 13.500 4" fill="none" stroke="#e8f1ff" stroke-width="1.100"/>
  <circle cx="11.800" cy="11.800" r="4" fill="url(#gPlus)"/>
  <path d="M9.600 11.800h4.400M11.800 9.600v4.400" stroke="#fff" stroke-width="1.300"/>
</svg>
<svg style="left:428px;top:422px" width="16" height="15" viewBox="0 0 16 15">
  <rect x="0.400" y="0.400" width="11.400" height="9.800" rx=".8" fill="#b9d0f8" stroke="#5f86e0" stroke-width=".8"/>
  <rect x="0.400" y="0.400" width="11.400" height="1.500" fill="#2d5fe0"/>
  <rect x="4.400" y="5.200" width="11.200" height="9.200" rx=".8" fill="url(#gWin)" stroke="#6f8fd6" stroke-width=".8"/>
  <rect x="4.400" y="5.200" width="11.200" height="1.500" fill="#2d5fe0"/>
  <rect x="5" y="6.800" width="10" height="7" fill="#8fb5f6" opacity=".5"/>
</svg>
</body>
</html>
